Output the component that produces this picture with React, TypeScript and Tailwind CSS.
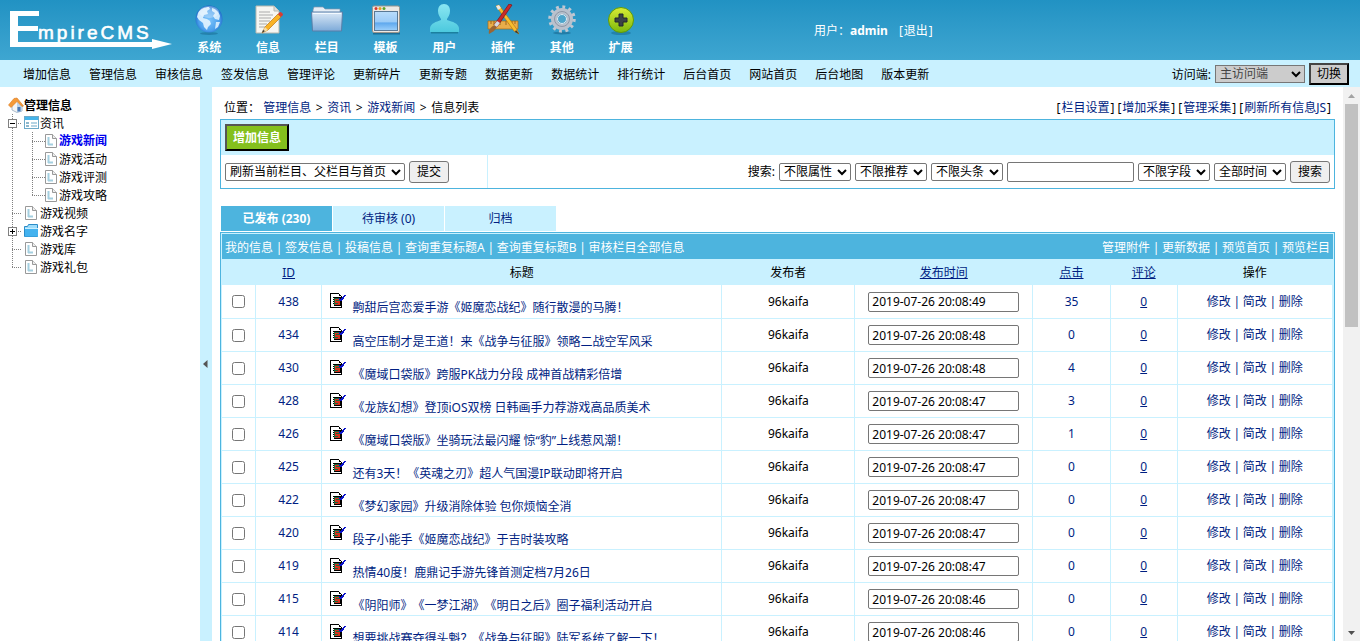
import { useState } from 'react';
import type { ReactNode } from 'react';

const subMenu = [
  '增加信息', '管理信息', '审核信息', '签发信息', '管理评论', '更新碎片', '更新专题',
  '数据更新', '数据统计', '排行统计', '后台首页', '网站首页', '后台地图', '版本更新',
];

const rows = [
  { id: 438, title: '齁甜后宫恋爱手游《姬魔恋战纪》随行散漫的马腾！', time: '2019-07-26 20:08:49', hits: 35 },
  { id: 434, title: '高空压制才是王道！来《战争与征服》领略二战空军风采', time: '2019-07-26 20:08:48', hits: 0 },
  { id: 430, title: '《魔域口袋版》跨服PK战力分段 成神首战精彩倍增', time: '2019-07-26 20:08:48', hits: 4 },
  { id: 428, title: '《龙族幻想》登顶iOS双榜 日韩画手力荐游戏高品质美术', time: '2019-07-26 20:08:47', hits: 3 },
  { id: 426, title: '《魔域口袋版》坐骑玩法最闪耀 惊“豹”上线惹风潮！', time: '2019-07-26 20:08:47', hits: 1 },
  { id: 425, title: '还有3天！《英魂之刃》超人气国漫IP联动即将开启', time: '2019-07-26 20:08:47', hits: 0 },
  { id: 422, title: '《梦幻家园》升级消除体验 包你烦恼全消', time: '2019-07-26 20:08:47', hits: 0 },
  { id: 420, title: '段子小能手《姬魔恋战纪》于吉时装攻略', time: '2019-07-26 20:08:47', hits: 0 },
  { id: 419, title: '热情40度！鹿鼎记手游先锋首测定档7月26日', time: '2019-07-26 20:08:47', hits: 0 },
  { id: 415, title: '《阴阳师》《一梦江湖》《明日之后》圈子福利活动开启', time: '2019-07-26 20:08:46', hits: 0 },
  { id: 414, title: '想要挑战赛夺得头魁？《战争与征服》陆军系统了解一下！', time: '2019-07-26 20:08:46', hits: 0 },
];

function Logo() {
  return (
    <div className="relative h-[60px] w-[180px] shrink-0">
      <svg width="180" height="60" viewBox="0 0 180 60" fill="#fff">
        <path d="M10 11h29v5H18v10h20v5H18v11h134v-3l20 5-20 5v-2H10z" />
      </svg>
      <span className="absolute left-[38px] top-[21px] font-['Liberation_Sans'] text-[19px] leading-6 tracking-[3px] text-white [-webkit-text-stroke:0.6px_#fff]">mpireCMS</span>
    </div>
  );
}

function GlobeIcon() {
  return (
    <svg width="32" height="32" viewBox="0 0 32 32">
      <defs>
        <radialGradient id="globe" cx=".5" cy=".55" r=".55">
          <stop offset="0" stopColor="#7cc4fb" />
          <stop offset=".7" stopColor="#4a9fec" />
          <stop offset="1" stopColor="#1a66c4" />
        </radialGradient>
      </defs>
      <ellipse cx="16" cy="29.500" rx="9" ry="1.500" fill="#1b6f98" opacity=".6" />
      <circle cx="16" cy="15" r="13.500" fill="url(#globe)" />
      <path d="M5 9c2-4 7-6 11-6l1 2-3 2 1 3-4 1-1 3 4 1 3 2 1 3-3 3-1 3-3-3-1-4-4-3-2-3z" fill="#e3f4ff" opacity=".9" />
      <path d="M19 4c4 1 7 4 8 8l-1 4-4-1-2-3 2-3-3-2zM23 18h4l-2 5-3 2z" fill="#e3f4ff" opacity=".85" />
      <ellipse cx="16" cy="8" rx="10" ry="6" fill="#fff" opacity=".3" />
    </svg>
  );
}

function NoteIcon() {
  return (
    <svg width="32" height="32" viewBox="0 0 32 32">
      <path d="M4 2h18l5 5v22H4z" fill="#f6f6f2" stroke="#b8b8ae" />
      <path d="M7 8h11M7 11h14M7 14h12M7 17h11M7 20h8M7 23h6" stroke="#aaa" />
      <path d="M22 2v5h5" fill="#ddd" stroke="#b8b8ae" />
      <path d="M10 29l3-6L26 10l3 3-13 13z" fill="#f9b325" stroke="#bd7412" strokeWidth=".7" />
      <path d="M26 10l2-2c1 0 3 1 3 3l-2 2z" fill="#d93b33" />
      <path d="M10 29l3-6 3 3z" fill="#f5ddaa" />
      <path d="M10 29l1-3 2 1z" fill="#333" />
    </svg>
  );
}

function FolderIcon() {
  return (
    <svg width="32" height="32" viewBox="0 0 32 32">
      <defs>
        <linearGradient id="folder" x2="0" y2="1">
          <stop offset="0" stopColor="#dce9f6" />
          <stop offset="1" stopColor="#7daad9" />
        </linearGradient>
      </defs>
      <path d="M2 6l1-3h9l2 2h15v5H2z" fill="#e5edf5" stroke="#8096b0" strokeWidth=".7" />
      <path d="M.5 8h31l-1 19h-29z" fill="url(#folder)" stroke="#5a7fa8" />
      <path d="M2 9.500h28" stroke="#f4faff" />
    </svg>
  );
}

function WindowIcon() {
  return (
    <svg width="32" height="32" viewBox="0 0 32 32">
      <defs>
        <linearGradient id="window" x2="0" y2="1">
          <stop offset="0" stopColor="#b9dcfb" />
          <stop offset=".55" stopColor="#9bcbf7" />
          <stop offset=".6" stopColor="#5ea8ee" />
          <stop offset="1" stopColor="#9dd0fb" />
        </linearGradient>
      </defs>
      <path d="M3 29.500h27" stroke="#1b6f98" strokeWidth="2" />
      <rect x="2.500" y="2" width="27" height="26.500" rx="1.500" fill="#ece9e4" stroke="#9a958d" />
      <circle cx="6" cy="4.500" r="1.500" fill="#d9382d" />
      <circle cx="10" cy="4.500" r="1.500" fill="#e8a020" />
      <circle cx="14" cy="4.500" r="1.500" fill="#59a52c" />
      <rect x="4.500" y="7.500" width="23" height="19" fill="url(#window)" stroke="#5a7894" />
    </svg>
  );
}

function UserIcon() {
  return (
    <svg width="32" height="32" viewBox="0 0 32 32">
      <defs>
        <linearGradient id="user" x2="0" y2="1">
          <stop offset="0" stopColor="#8ae6f2" />
          <stop offset="1" stopColor="#4cc9de" />
        </linearGradient>
      </defs>
      <path d="M3 28.500h27" stroke="#1b7f9f" strokeWidth="2" />
      <path d="M16 0c4 0 6 3 6 7s-2 6-3 8v1c6 2 11 3 12 8v4H2v-4c1-5 6-6 11-8v-1c-1-2-3-4-3-8s2-7 6-7z" fill="url(#user)" />
    </svg>
  );
}

function PluginIcon() {
  return (
    <svg width="32" height="32" viewBox="0 0 32 32">
      <path d="M1 17h30v8H1z" fill="#e9ad4a" stroke="#a66b18" strokeWidth=".7" />
      <path d="M4 17v3M7 17v4M10 17v3M13 17v4M19 17v4M22 17v3M25 17v4M28 17v3" stroke="#8a5510" strokeWidth=".8" />
      <path d="M9 2l3-1 17 23 3 6-5-3z" fill="#f8bd2d" stroke="#b87a12" strokeWidth=".7" />
      <path d="M29 26l3 4-4-2z" fill="#333" />
      <path d="M9 2l3-1 2 3-3 2z" fill="#e9e9e9" />
      <path d="M22 0l3 1L10 23l-3-2z" fill="#c92a2a" stroke="#7d1414" strokeWidth=".7" />
      <path d="M8 21l2 2-3 4-5 3c-1-3 1-7 6-9z" fill="#9b6533" />
      <path d="M10 17l3 2-3 4-3-2z" fill="#d5d9df" />
    </svg>
  );
}

function GearIcon() {
  return (
    <svg width="32" height="32" viewBox="0 0 32 32">
      <ellipse cx="16" cy="29" rx="9" ry="1.500" fill="#1b6f98" opacity=".7" />
      <circle cx="16" cy="15" r="12" fill="none" stroke="#c0c7d2" strokeWidth="3.500" strokeDasharray="2.8 3.483" />
      <circle cx="16" cy="15" r="8" fill="none" stroke="#b9c1cd" strokeWidth="6" />
      <circle cx="16" cy="15" r="7.500" fill="none" stroke="#8d97a6" />
      <circle cx="16" cy="15" r="4.500" fill="#4ca5cb" stroke="#e7ebf0" />
    </svg>
  );
}

function PlusIcon() {
  return (
    <svg width="32" height="32" viewBox="0 0 32 32">
      <defs>
        <linearGradient id="plus" x2="0" y2="1">
          <stop offset="0" stopColor="#d9ec35" />
          <stop offset="1" stopColor="#7cb80c" />
        </linearGradient>
      </defs>
      <ellipse cx="16" cy="29" rx="10" ry="2" fill="#1b6f98" opacity=".6" />
      <circle cx="16" cy="16" r="12.500" fill="url(#plus)" stroke="#5f9a08" />
      <path d="M14 10h4v4h4v4h-4v4h-4v-4h-4v-4h4z" fill="#3c4247" stroke="#23292c" />
    </svg>
  );
}

const mainNav = [
  { label: '系统', icon: <GlobeIcon /> },
  { label: '信息', icon: <NoteIcon /> },
  { label: '栏目', icon: <FolderIcon /> },
  { label: '模板', icon: <WindowIcon /> },
  { label: '用户', icon: <UserIcon /> },
  { label: '插件', icon: <PluginIcon /> },
  { label: '其他', icon: <GearIcon /> },
  { label: '扩展', icon: <PlusIcon /> },
];

function Select({ label, options, className }: { label: string; options: string[]; className: string }) {
  return (
    <span className="relative inline-flex">
      <select aria-label={label} className={`h-[18px] appearance-none border border-[#767676] pl-1 pr-4 leading-4 ${className}`}>
        {options.map((o) => (
          <option key={o}>{o}</option>
        ))}
      </select>
      <svg className="pointer-events-none absolute right-1 top-[6px]" width="10" height="7" viewBox="0 0 10 7" fill="none" stroke="currentColor" strokeWidth="2">
        <path d="M1 1l4 4 4-4" />
      </svg>
    </span>
  );
}

function PageIcon() {
  return (
    <svg width="12" height="15" viewBox="0 0 12 15" className="shrink-0">
      <path d="M.5.5h7l4 4v9H.5z" fill="#fff" stroke="#999" />
      <path d="M7.500.5v4h4" fill="#eee" stroke="#999" />
      <path d="M3.500 3v8M3 10.500h5" stroke="#a4cfe0" strokeWidth="2" />
    </svg>
  );
}

function ListIcon() {
  return (
    <svg width="15" height="14" viewBox="0 0 15 14" className="shrink-0">
      <rect x=".5" y=".5" width="14" height="12" fill="#fff" stroke="#6da9c8" />
      <path d="M1 1h13v3H1z" fill="#45b4ea" />
      <path d="M2 7h3M2 10h3" stroke="#8cb7cc" strokeWidth="2" />
      <path d="M7 7h6M7 10h6" stroke="#6da9c8" />
    </svg>
  );
}

function TreeFolderIcon() {
  return (
    <svg width="15" height="14" viewBox="0 0 15 14" className="shrink-0">
      <path d="M.5 2.500h3l1-2h9v12H.5z" fill="#9ddcfa" stroke="#2a8cc8" />
      <path d="M1 4h13v8.500H1z" fill="#43b2ef" />
      <path d="M1 4.500h13" stroke="#c9eeff" />
    </svg>
  );
}

function HomeIcon() {
  return (
    <svg width="16" height="16" viewBox="0 0 16 16" className="shrink-0">
      <path d="M4 8l5-5 5 5v6l-5 1.500L4 13z" fill="#f5f5f5" stroke="#8aa0b8" strokeWidth=".7" />
      <path d="M9 5l5 4v5l-5 1.500z" fill="#bcd3ea" />
      <path d="M.5 8L6 1.500l3-.5 6.500 8-1.500.5L9 4.500 3 10.500z" fill="#f59a38" stroke="#d97a22" strokeWidth=".6" />
      <path d="M9.500 10h3v4.500h-3z" fill="#4a78b5" />
    </svg>
  );
}

type Toggle = 'open' | 'closed';

// dotted connector in front of a tree node
function Branch({ x, width, last, node = true, toggle }: { x: number; width: number; last?: boolean; node?: boolean; toggle?: Toggle }) {
  return (
    <svg width={width} height="18" className="shrink-0" stroke="#808080" fill="none" shapeRendering="crispEdges">
      <path d={`M${x + 0.5} 0v${last ? 9 : 18}`} strokeDasharray="1 1" />
      {node && <path d={`M${x} 9.5H${width}`} strokeDasharray="1 1" />}
      {toggle && <rect x={x - 3.5} y="5.5" width="8" height="8" fill="#fff" />}
      {toggle && <path d={`M${x - 2} 9.5h5`} stroke="#000" />}
      {toggle === 'closed' && <path d={`M${x + 0.5} 7v5`} stroke="#000" />}
    </svg>
  );
}

function TreeNode({ label, icon, last, toggle }: { label: string; icon: ReactNode; last?: boolean; toggle?: Toggle }) {
  return (
    <li className="flex h-[18px] items-center">
      <Branch x={8} width={18} last={last} toggle={toggle} />
      <span className="flex w-[18px] justify-center">{icon}</span>
      <a href="#" className="pt-[2px]">{label}</a>
    </li>
  );
}

function TreeLeaf({ label, last, active }: { label: string; last?: boolean; active?: boolean }) {
  return (
    <li className="flex h-[18px] items-center">
      <Branch x={8} width={18} node={false} />
      <Branch x={10} width={23} last={last} />
      <span className="flex w-[14px]"><PageIcon /></span>
      <a href="#" className={active ? 'font-bold text-[#0000ee]' : 'pt-[2px]'}>{label}</a>
    </li>
  );
}

function Sidebar() {
  return (
    <aside className="w-[200px] shrink-0 pt-[9px]">
      <a href="#" className="flex h-[18px] items-center pl-2 font-bold">
        <HomeIcon />
        <span className="pt-[2px]">管理信息</span>
      </a>
      <ul className="pl-1">
        <TreeNode label="资讯" icon={<ListIcon />} toggle="open" />
        <TreeLeaf label="游戏新闻" active />
        <TreeLeaf label="游戏活动" />
        <TreeLeaf label="游戏评测" />
        <TreeLeaf label="游戏攻略" last />
        <TreeNode label="游戏视频" icon={<PageIcon />} />
        <TreeNode label="游戏名字" icon={<TreeFolderIcon />} toggle="closed" />
        <TreeNode label="游戏库" icon={<PageIcon />} />
        <TreeNode label="游戏礼包" icon={<PageIcon />} last />
      </ul>
    </aside>
  );
}

function ArticleIcon() {
  return (
    <svg width="16" height="16" viewBox="0 0 16 16" shapeRendering="crispEdges" className="shrink-0">
      <path d="M0 0h9v1h1v1h1v1h1v12H0z" fill="#000" />
      <path d="M1 1h8v2h2v11H1z" fill="#fff" />
      <path d="M3 4h7v1H3zM3 6h1v1H3zM3 8h1v1H3zM3 10h1v1H3zM4 12h6v1H4z" fill="#000" />
      <path d="M4 5h6v7H4z" fill="#1c6b3c" />
      <path d="M5 6h5v1H6v1h4v4H5v-1h3v-1H5z" fill="#d8321e" />
      <path d="M10 4h1v9h-1z" fill="#000" />
      <path d="M14 2h2v1h-1v1h-1v2h-1v1h-1v1h-2V7H9V5h1v1h1V5h1V4h1V3h1z" fill="#0a12c8" />
    </svg>
  );
}

function LinkList({ items }: { items: string[] }) {
  return (
    <>
      {items.map((item, i) => (
        <span key={item}>
          {i > 0 && <span className="inline-block w-3 text-center">|</span>}
          <a href="#">{item}</a>
        </span>
      ))}
    </>
  );
}

export default function App() {
  const [tab, setTab] = useState(0);
  const [checked, setChecked] = useState<number[]>([]);
  const tabs = ['已发布 (230)', '待审核 (0)', '归档'];
  const crumbs = ['管理信息', '资讯', '游戏新闻'];
  const actions = ['栏目设置', '增加采集', '管理采集', '刷新所有信息JS'];
  const buttonClass = 'h-[22px] rounded-[3px] border border-[#767676] bg-[#efefef] px-[7px] leading-4';

  const toggleRow = (id: number) => {
    setChecked(checked.includes(id) ? checked.filter((c) => c !== id) : [...checked, id]);
  };

  return (
    <div className="flex h-screen flex-col overflow-hidden bg-white font-['Noto_Sans','Noto_Sans_CJK_SC',sans-serif] text-[12px] leading-[18px] text-black [text-spacing-trim:space-all]">
      <header className="flex h-[60px] shrink-0 bg-linear-to-b from-[#2192c3] to-[#3ea6d1] text-white">
        <Logo />
        <nav className="flex w-[470px] shrink-0">
          {mainNav.map((item) => (
            <a key={item.label} href="#" className="flex flex-1 flex-col items-center pt-1 font-bold">
              {item.icon}
              <span className="pt-[3px]">{item.label}</span>
            </a>
          ))}
        </nav>
        <p className="ml-[164px] pt-[22px]">
          用户：<a href="#" className="mr-[11px] font-bold">admin</a>[<a href="#" className="mx-px">退出</a>]
        </p>
      </header>

      <div className="flex h-[27px] shrink-0 items-center justify-between bg-[#c9f1ff] pl-[23px] pr-[11px]">
        <nav className="flex gap-[18px] pt-[2px]">
          {subMenu.map((item) => (
            <a key={item} href="#">{item}</a>
          ))}
        </nav>
        <div className="flex items-center gap-1">
          <span className="pt-[2px]">访问端:</span>
          <Select label="访问端" options={['主访问端']} className="w-[90px] bg-[#cccccc] text-[#444]" />
          <button type="button" className="h-[22px] border-2 border-t-[#444] border-l-[#444] border-r-black border-b-black bg-[#cccccc] px-[6px]">切换</button>
        </div>
      </div>

      <div className="flex min-h-0 flex-1">
        <Sidebar />

        <div className="flex w-3 shrink-0 items-center bg-[#c9f1ff] pl-[2px]">
          <button type="button" aria-label="收起">
            <svg width="6" height="8" viewBox="0 0 6 8" fill="#555"><path d="M5.500 0v8L1 4z" /></svg>
          </button>
        </div>

        <main className="min-w-0 flex-1 overflow-hidden px-2 pt-3">
          <div className="flex justify-between px-1 pb-[2px]">
            <p>
              位置：{' '}
              {crumbs.map((c) => (
                <span key={c}>
                  <a href="#" className="text-[#001e82]">{c}</a>
                  <span className="inline-block w-4 text-center">&gt;</span>
                </span>
              ))}
              信息列表
            </p>
            <p className="flex gap-[3px]">
              {actions.map((a) => (
                <span key={a}>[<a href="#" className="mx-px text-[#001e82]">{a}</a>]</span>
              ))}
            </p>
          </div>

          <section className="border border-[#4db4de]">
            <div className="bg-[#c9f1ff] px-1 py-1">
              <button type="button" className="block h-[27px] border-2 border-t-[#555] border-l-[#555] border-r-black border-b-black bg-[#84c01d] px-[6px] pt-px font-bold text-white">增加信息</button>
            </div>
            <div className="flex h-[33px]">
              <form className="flex w-[24%] items-center gap-1 border-r border-[#c9f1ff] pl-1">
                <Select label="刷新" options={['刷新当前栏目、父栏目与首页']} className="w-[180px] rounded-[2px] bg-white" />
                <button type="button" className={buttonClass}>提交</button>
              </form>
              <form className="flex flex-1 items-center justify-end gap-1 pr-1">
                <label htmlFor="keyword">搜索:</label>
                <Select label="属性" options={['不限属性']} className="w-[72px] rounded-[2px] bg-white" />
                <Select label="推荐" options={['不限推荐']} className="w-[72px] rounded-[2px] bg-white" />
                <Select label="头条" options={['不限头条']} className="w-[72px] rounded-[2px] bg-white" />
                <input id="keyword" type="text" className="h-5 w-[127px] rounded-[2px] border border-[#767676] px-1" />
                <Select label="字段" options={['不限字段']} className="w-[72px] rounded-[2px] bg-white" />
                <Select label="时间" options={['全部时间']} className="w-[72px] rounded-[2px] bg-white" />
                <button type="button" className={buttonClass}>搜索</button>
              </form>
            </div>
          </section>

          <div className="mt-[17px] flex gap-px pl-px">
            {tabs.map((t, i) => (
              <button
                key={t}
                type="button"
                onClick={() => setTab(i)}
                className={`h-[25px] w-[111px] pt-px ${i === tab ? 'bg-[#4db4de] font-bold text-white' : 'bg-[#c9f1ff] text-[#001e82]'}`}
              >
                {t}
              </button>
            ))}
          </div>

          <section className="mt-px border border-[#4db4de] bg-[#c9f1ff] p-px">
            <div className="flex h-[25px] items-center justify-between bg-[#4db4de] px-[3px] pt-[2px] text-white">
              <p><LinkList items={['我的信息', '签发信息', '投稿信息', '查询重复标题A', '查询重复标题B', '审核栏目全部信息']} /></p>
              <p><LinkList items={['管理附件', '更新数据', '预览首页', '预览栏目']} /></p>
            </div>
            <table className="w-full table-fixed text-center">
              <thead>
                <tr className="h-[26px] [&>th]:pt-[2px] [&>th]:font-normal">
                  <th className="w-[3%]"></th>
                  <th className="w-[6%]"><a href="#" className="text-[#001e82] underline">ID</a></th>
                  <th className="w-[36%]">标题</th>
                  <th className="w-[12%]">发布者</th>
                  <th className="w-[16%]"><a href="#" className="text-[#001e82] underline">发布时间</a></th>
                  <th className="w-[7%]"><a href="#" className="text-[#001e82] underline">点击</a></th>
                  <th className="w-[6%]"><a href="#" className="text-[#001e82] underline">评论</a></th>
                  <th className="w-[14%]">操作</th>
                </tr>
              </thead>
              <tbody className="bg-white">
                {rows.map((row) => (
                  <tr key={row.id} className="h-[33px] border-b border-[#c9f1ff] text-[#001e82] [&>td]:border-r [&>td]:border-[#c9f1ff] [&>td]:pt-px">
                    <td>
                      <input
                        type="checkbox"
                        aria-label={`${row.id}`}
                        checked={checked.includes(row.id)}
                        onChange={() => toggleRow(row.id)}
                        className="mx-auto block size-[13px]"
                      />
                    </td>
                    <td>{row.id}</td>
                    <td>
                      <div className="flex h-[31px] gap-[6px] overflow-hidden pt-[7px] pl-2 text-left whitespace-nowrap">
                        <ArticleIcon />
                        <a href="#" className="pt-[6px]">{row.title}</a>
                      </div>
                    </td>
                    <td className="text-black">96kaifa</td>
                    <td>
                      <input type="text" aria-label="发布时间" defaultValue={row.time} className="mx-auto block h-5 w-[151px] rounded-[2px] border border-[#767676] bg-white px-[3px] text-black" />
                    </td>
                    <td>{row.hits}</td>
                    <td><a href="#" className="underline">0</a></td>
                    <td><LinkList items={['修改', '简改', '删除']} /></td>
                  </tr>
                ))}
              </tbody>
            </table>
          </section>
        </main>

        {/* scrollbar of the content pane */}
        <div className="flex w-[17px] shrink-0 flex-col items-center bg-[#f1f1f1]">
          <svg width="17" height="17" viewBox="0 0 17 17" fill="#a3a3a3"><path d="M5 11h7L8.500 7z" /></svg>
          <div className="h-[223px] w-[13px] bg-[#c1c1c1]" />
          <svg className="mt-auto" width="17" height="17" viewBox="0 0 17 17" fill="#505050"><path d="M5 7h7l-3.500 4z" /></svg>
        </div>
      </div>
    </div>
  );
}
